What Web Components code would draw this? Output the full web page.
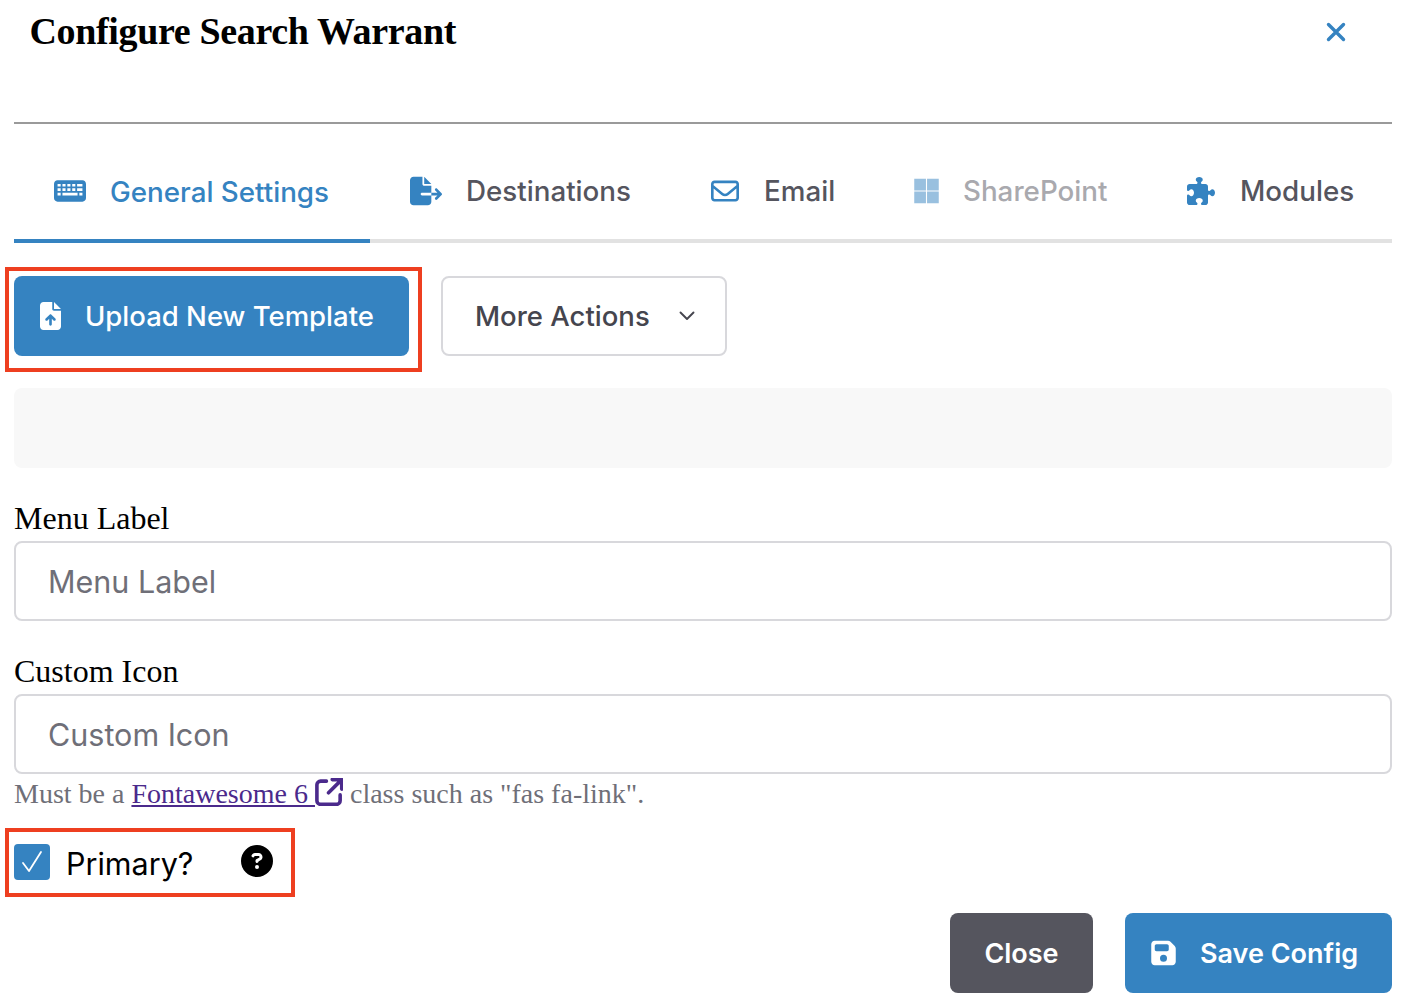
<!DOCTYPE html>
<html lang="en"><head><meta charset="utf-8"><title>Configure Search Warrant</title>
<style>
html,body{margin:0;padding:0;background:#fff}
body{font-family:"Liberation Serif",serif;color:#000}
</style></head><body>
<config-modal></config-modal>
<script>
const ICONS={
keyboard:['0 0 576 512','<path fill-rule="evenodd" d="M64 64C28.7 64 0 92.7 0 128V384c0 35.3 28.7 64 64 64H512c35.3 0 64-28.7 64-64V128c0-35.3-28.7-64-64-64H64zM64 128h56v48H64zM152 128h56v48h-56zM240 128h56v48h-56zM328 128h56v48h-56zM416 128h96v48h-96zM64 208h56v48H64zM152 208h56v48h-56zM240 208h56v48h-56zM328 208h56v48h-56zM416 208h96v48h-96zM64 288h56v48H64zM152 288h272v48H152zM456 288h56v48h-56z"/>'],
export:['0 0 576 512','<path d="M0 64C0 28.7 28.7 0 64 0H224V128c0 17.7 14.3 32 32 32H384V288H216c-13.3 0-24 10.7-24 24s10.7 24 24 24H384V448c0 35.3-28.7 64-64 64H64c-35.3 0-64-28.7-64-64V64zM384 336V288H494.1l-39-39c-9.4-9.4-9.4-24.6 0-33.9s24.6-9.4 33.9 0l80 80c9.4 9.4 9.4 24.6 0 33.9l-80 80c-9.4 9.4-24.6 9.4-33.9 0s-9.4-24.6 0-33.9l39-39H384zm0-208H256V0L384 128z"/>'],
envelope:['0 0 512 512','<path d="M64 112c-8.8 0-16 7.2-16 16v22.1L220.5 291.7c20.7 17 50.4 17 71.1 0L464 150.1V128c0-8.8-7.2-16-16-16H64zM48 212.2V384c0 8.8 7.2 16 16 16H448c8.8 0 16-7.2 16-16V212.2L322 328.8c-38.4 31.5-93.7 31.5-132 0L48 212.2zM0 128C0 92.7 28.7 64 64 64H448c35.3 0 64 28.7 64 64V384c0 35.3-28.7 64-64 64H64c-35.3 0-64-28.7-64-64V128z"/>'],
windows:['0 0 448 512','<path d="M0 32H214V246H0zM234 32H448V246H234zM0 266H214V480H0zM234 266H448V480H234z"/>'],
puzzle:['0 0 512 512','<path d="M192 104.8c0-9.2-5.8-17.3-13.2-22.8C167.2 73.3 160 61.3 160 48c0-26.5 28.7-48 64-48s64 21.5 64 48c0 13.3-7.2 25.3-18.8 34c-7.4 5.5-13.2 13.6-13.2 22.8c0 12.8 10.4 23.2 23.2 23.2H336c26.5 0 48 21.5 48 48v56.8c0 12.8 10.4 23.2 23.2 23.2c9.2 0 17.3-5.8 22.8-13.2c8.7-11.6 20.7-18.8 34-18.8c26.5 0 48 28.7 48 64s-21.5 64-48 64c-13.3 0-25.3-7.2-34-18.8c-5.5-7.4-13.6-13.2-22.8-13.2c-12.8 0-23.2 10.4-23.2 23.2V464c0 26.5-21.5 48-48 48H279.2c-12.8 0-23.2-10.4-23.2-23.2c0-9.2 5.8-17.3 13.2-22.8c11.6-8.7 18.8-20.7 18.8-34c0-26.5-28.7-48-64-48s-64 21.5-64 48c0 13.3 7.2 25.3 18.8 34c7.4 5.5 13.2 13.6 13.2 22.8c0 12.8-10.4 23.2-23.2 23.2H48c-26.5 0-48-21.5-48-48V343.2C0 330.4 10.4 320 23.2 320c9.2 0 17.3 5.8 22.8 13.2C54.7 344.8 66.7 352 80 352c26.5 0 48-28.7 48-64s-21.5-64-48-64c-13.3 0-25.3 7.2-34 18.8C40.5 250.2 32.4 256 23.2 256C10.4 256 0 245.6 0 232.8V176c0-26.5 21.5-48 48-48H168.8c12.8 0 23.2-10.4 23.2-23.2z"/>'],
upload:['0 0 384 512','<path d="M64 0C28.7 0 0 28.7 0 64V448c0 35.3 28.7 64 64 64H320c35.3 0 64-28.7 64-64V160H256c-17.7 0-32-14.3-32-32V0H64zM256 0V128H384L256 0zM216 408c0 13.3-10.7 24-24 24s-24-10.7-24-24V305.9l-31 31c-9.4 9.4-24.6 9.4-33.9 0s-9.4-24.6 0-33.9l72-72c9.4-9.4 24.6-9.4 33.9 0l72 72c9.4 9.4 9.4 24.6 0 33.9s-24.6 9.4-33.9 0l-31-31V408z"/>'],
floppy:['0 0 448 512','<path d="M64 32C28.7 32 0 60.7 0 96V416c0 35.3 28.7 64 64 64H384c35.3 0 64-28.7 64-64V173.3c0-17-6.7-33.3-18.7-45.3L352 50.7C340 38.7 323.7 32 306.7 32H64zm0 96c0-17.7 14.3-32 32-32H288c17.7 0 32 14.3 32 32v64c0 17.7-14.3 32-32 32H96c-17.7 0-32-14.3-32-32V128zM224 288a64 64 0 1 1 0 128 64 64 0 1 1 0-128z"/>'],
question:['0 0 512 512','<path d="M256 512A256 256 0 1 0 256 0a256 256 0 1 0 0 512zM169.8 165.3c7.9-22.3 29.1-37.3 52.8-37.3h58.3c34.9 0 63.1 28.3 63.1 63.1c0 22.6-12.1 43.5-31.7 54.8L280 264.4c-.2 13-10.9 23.6-24 23.6c-13.3 0-24-10.7-24-24V250.5c0-8.6 4.6-16.5 12.1-20.8l44.3-25.4c4.7-2.7 7.6-7.7 7.6-13.1c0-8.4-6.8-15.1-15.1-15.1H222.6c-3.4 0-6.4 2.1-7.5 5.3l-.4 1.2c-4.4 12.5-18.2 19-30.6 14.6s-19-18.2-14.6-30.6l.4-1.2zM224 352a32 32 0 1 1 64 0 32 32 0 1 1 -64 0z"/>'],
external:['1.200 1 26.500 26.500','<path d="M12 4H6.500A3.500 3.500 0 0 0 3 7.500V22.500A3.500 3.500 0 0 0 6.500 26H21.500A3.500 3.500 0 0 0 25 22.500V17M14 15 26 3M17.500 2.500H26.500V11.500" fill="none" stroke="currentColor" stroke-width="3.400" stroke-linecap="round" stroke-linejoin="round"/>'],
xmark:['0 0 20 20','<path d="M2.500 2.500 17.500 17.500M17.500 2.500 2.500 17.500" fill="none" stroke="currentColor" stroke-width="3.400" stroke-linecap="round"/>'],
chevron:['0 0 16 10','<path d="M1.500 1.500 8 8 14.500 1.500" fill="none" stroke="currentColor" stroke-width="1.900" stroke-linecap="round" stroke-linejoin="round"/>'],
check:['0 0 24 24','<path d="M3 13 9 21 21 2" fill="none" stroke="currentColor" stroke-width="1.800" stroke-linecap="round" stroke-linejoin="round"/>']
};
class Base extends HTMLElement{
  render(html){ if(!this.shadowRoot) this.attachShadow({mode:'open'}); this.shadowRoot.innerHTML=html; }
}
class XIcon extends Base{
  connectedCallback(){
    const [vb,body]=ICONS[this.getAttribute('name')];
    const w=this.getAttribute('w')||28,h=this.getAttribute('h')||28;
    this.render(`<style>:host{display:inline-flex;flex:none;width:${w}px;height:${h}px;line-height:0}svg{width:100%;height:100%;fill:currentColor;display:block}</style><svg viewBox="${vb}" aria-hidden="true">${body}</svg>`);
  }
}
class XTab extends Base{
  connectedCallback(){
    const a=this.hasAttribute('active'),d=this.hasAttribute('disabled');
    this.render(`<style>
    :host{display:flex;flex:none;width:${this.getAttribute('tw')}px;height:115px;padding:14px 0 0 40px;box-sizing:border-box;margin-bottom:-4px;align-items:center;border-bottom:4px solid ${a?'#3583c1':'transparent'};
      font:500 27.750px Inter,sans-serif;color:${a?'#3583c1':d?'#a9a9ae':'#55555e'};white-space:nowrap}
    .i{display:flex;width:${this.getAttribute('iw')||56}px;flex:none;color:#3583c1;${d?'opacity:.5;':''}}
    .l{position:relative;top:${a?'1px':'0'}}
    </style><span class="i"><slot name="icon"></slot></span><span class="l"><slot></slot></span>`);
  }
}
class XTabs extends Base{
  connectedCallback(){
    this.render(`<style>:host{display:flex;height:119px;box-sizing:border-box;align-items:flex-end;border-bottom:4px solid #e2e2e2}</style><slot></slot>`);
  }
}
class XBtn extends Base{
  connectedCallback(){
    const k=this.getAttribute('kind')||'primary';
    const s={primary:'background:#3583c1;color:#fff;',dark:'background:#55555e;color:#fff;',light:'background:#fff;color:#45454e;border:2px solid #d8d8dc;'}[k];
    this.render(`<style>:host{display:inline-flex;box-sizing:border-box;height:80px;align-items:center;border-radius:8px;font:500 27.500px Inter,sans-serif;white-space:nowrap;${s}}</style><slot></slot>`);
  }
}
class XMarked extends Base{
  connectedCallback(){
    const [t,r,b,l]=(this.getAttribute('out')||'9 13 16 9').split(' ');
    this.render(`<style>:host{display:block;position:relative;width:fit-content}
    .m{position:absolute;top:-${t}px;right:-${r}px;bottom:-${b}px;left:-${l}px;border:4px solid #ee3f20;pointer-events:none}</style><slot></slot><div class="m"></div>`);
  }
}
class XField extends Base{
  connectedCallback(){
    const t=this.getAttribute('label');
    this.render(`<style>:host{display:block}
    label{display:block;font:32px/37px "Liberation Serif",serif;color:#000;margin-bottom:4px;height:37px}
    .in{box-sizing:border-box;height:80px;border:2px solid #d8d8dc;border-radius:8px;padding:1px 32px 0;display:flex;align-items:center;font:400 30.500px Inter,sans-serif;color:#6f6f78}</style>
    <label>${t}</label><div class="in">${t}</div><slot></slot>`);
  }
}
class XCheck extends Base{
  connectedCallback(){
    this.render(`<style>:host{display:flex;align-items:center;height:50px;width:260px;color:#000;font:400 30.500px Inter,sans-serif}
    .b{width:36px;height:36px;border-radius:4px;background:#3583c1;color:#fff;display:flex;align-items:center;justify-content:center;margin-right:16px;flex:none;position:relative;top:-1px}
    .t{width:175px;flex:none}
    </style><span class="b"><x-icon name="check" w="24" h="24"></x-icon></span><span class="t"><slot></slot></span><x-icon name="question" w="32" h="32" style="position:relative;top:-2px"></x-icon>`);
  }
}
class ConfigModal extends Base{
  connectedCallback(){
    this.render(`<style>
    :host{display:block;box-sizing:border-box;width:1402px;height:1002px;padding:0 10px 0 14px;overflow:hidden}
    header{height:122px;box-sizing:border-box;display:flex;justify-content:space-between;padding:9px 46px 0 15.500px}
    h1{margin:0;font:bold 38px/44px "Liberation Serif",serif;letter-spacing:-.35px;color:#000}
    .x{color:#3583c1;margin-top:13px}
    hr{margin:0;border:0;height:2px;background:#9a9a9a}
    .acts{display:flex;gap:32px;margin-top:33px}
    .bar{height:80px;background:#f8f8f8;border-radius:8px;margin-top:32px}
    .f1{margin-top:32px}.f2{margin-top:32px}
    .help{font:28px/32px "Liberation Serif",serif;color:#6f6f78;margin-top:4px;display:flex;align-items:center;white-space:pre}
    a{color:#4b2a8c;text-decoration:underline}
    .chk{margin-top:28px}
    footer{display:flex;justify-content:flex-end;gap:32px;margin-top:25px}
    .row{display:flex;align-items:center}
    .ft{font:600 27px Inter,sans-serif}
    </style>
    <header><h1>Configure Search Warrant</h1><x-icon class="x" name="xmark" w="20" h="20"></x-icon></header>
    <hr>
    <x-tabs>
      <x-tab active tw="356"><x-icon slot="icon" name="keyboard" w="32" h="32"></x-icon>General Settings</x-tab>
      <x-tab tw="301"><x-icon slot="icon" name="export" w="32" h="30"></x-icon>Destinations</x-tab>
      <x-tab tw="203" iw="53"><x-icon slot="icon" name="envelope" w="28" h="28"></x-icon>Email</x-tab>
      <x-tab tw="273" disabled iw="49"><x-icon slot="icon" name="windows" w="25" h="28"></x-icon>SharePoint</x-tab>
      <x-tab tw="245" iw="53"><x-icon slot="icon" name="puzzle" w="28" h="28"></x-icon>Modules</x-tab>
    </x-tabs>
    <div class="acts">
      <x-marked><x-btn style="width:395px"><span class="row" style="padding-left:26px"><x-icon name="upload" w="21" h="28" style="margin-right:24px"></x-icon>Upload New Template</span></x-btn></x-marked>
      <x-btn kind="light" style="width:286px"><span class="row" style="padding-left:32px">More Actions<x-icon name="chevron" w="16" h="10" style="margin-left:29px"></x-icon></span></x-btn>
    </div>
    <div class="bar"></div>
    <x-field class="f1" label="Menu Label"></x-field>
    <x-field class="f2" label="Custom Icon"></x-field>
    <div class="help">Must be a <a href="#">Fontawesome 6 </a><x-icon name="external" w="28" h="28" style="color:#4b2a8c;position:relative;top:-2px"></x-icon> class such as "fas fa-link".</div>
    <x-marked class="chk" out="10 21 9 9"><x-check>Primary?</x-check></x-marked>
    <footer>
      <x-btn kind="dark" style="width:143px;justify-content:center"><span class="ft">Close</span></x-btn>
      <x-btn style="width:267px"><span class="row ft" style="padding-left:26px"><x-icon name="floppy" w="25" h="28" style="margin-right:24px"></x-icon>Save Config</span></x-btn>
    </footer>`);
  }
}
customElements.define('x-icon',XIcon);
customElements.define('x-tab',XTab);
customElements.define('x-tabs',XTabs);
customElements.define('x-btn',XBtn);
customElements.define('x-marked',XMarked);
customElements.define('x-field',XField);
customElements.define('x-check',XCheck);
customElements.define('config-modal',ConfigModal);
</script>
</body></html>
